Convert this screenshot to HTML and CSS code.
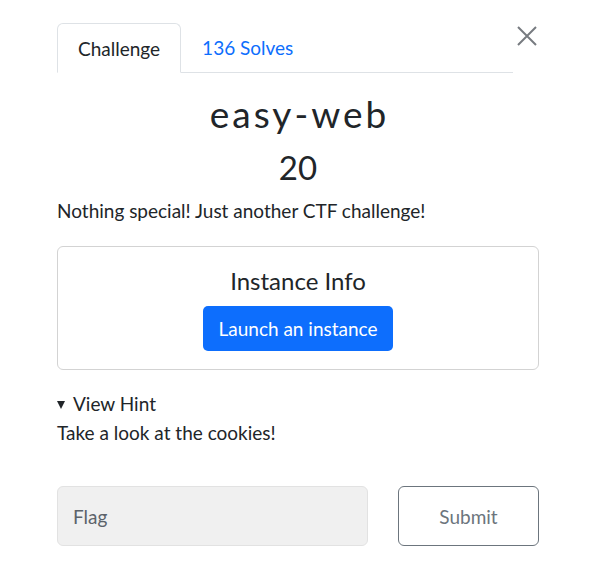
FILE: index.html
```html
<!DOCTYPE html>
<html>
<head>
<meta charset="utf-8">
<link rel="stylesheet" href="styles.css">
</head>
<body>
<div class="modal">
  <div class="top">
    <nav class="tabs">
      <div class="tab active">Challenge</div>
      <div class="tab link">136 Solves</div>
      <div class="tab-fill"></div>
    </nav>
    <button class="close" aria-label="Close">
      <svg width="20" height="20" viewBox="0 0 20 20"><path d="M1 1L19 19M19 1L1 19" stroke="#777b80" stroke-width="2" fill="none"/></svg>
    </button>
  </div>
  <h1 class="title">easy-web</h1>
  <h2 class="value">20</h2>
  <p class="desc">Nothing special! Just another CTF challenge!</p>
  <div class="card">
    <div class="card-title">Instance Info</div>
    <button class="btn-primary">Launch an instance</button>
  </div>
  <div class="hint">
    <div class="hint-toggle"><span class="tri"></span>View Hint</div>
    <div class="hint-body">Take a look at the cookies!</div>
  </div>
  <div class="submit-row">
    <div class="flag">Flag</div>
    <button class="btn-outline">Submit</button>
  </div>
</div>
</body>
</html>
```
FILE: styles.css
```css
* { box-sizing: border-box; }
html, body { margin: 0; padding: 0; background: #fff; }
body {
  font-family: Lato, "Liberation Sans", sans-serif;
  color: #212529;
  font-size: 19px;
}
.modal {
  width: 596px;
  padding: 23px 57px 0 57px;
}
.top {
  display: flex;
  align-items: flex-start;
}
.tabs {
  display: flex;
  flex: 1;
}
.tab {
  height: 50px;
  padding: 0 20px;
  display: flex;
  align-items: center;
  font-size: 19px;
  border-bottom: 1px solid #dee2e6;
}
.tab.active {
  border: 1px solid #dee2e6;
  border-bottom-color: transparent;
  border-radius: 6px 6px 0 0;
}
.tab.link { color: #0d6efd; padding-left: 21px; }
.tab-fill { flex: 1; border-bottom: 1px solid #dee2e6; }
.close {
  margin-left: 2px;
  margin-top: 1px;
  background: none;
  border: 0;
  padding: 2px;
  width: 24px;
  height: 24px;
  display: flex;
  align-items: center;
  justify-content: center;
}
.title {
  margin: 19px 0 0;
  text-align: center;
  font-size: 37px;
  font-weight: 400;
  letter-spacing: 3px;
  line-height: 1.2;
  padding-left: 3px;
}
.value {
  margin: 12px 0 0;
  text-align: center;
  font-size: 33px;
  font-weight: 400;
  line-height: 1.2;
}
.desc {
  margin: 9px 0 21px;
  line-height: 1.5;
}
.card {
  border: 1px solid #d3d3d3;
  border-radius: 6px;
  padding: 20px 0 18px;
  display: flex;
  flex-direction: column;
  align-items: center;
}
.card-title {
  font-size: 24px;
  line-height: 1.2;
  margin-bottom: 10px;
}
.btn-primary {
  font-family: inherit;
  font-size: 19px;
  color: #fff;
  background: #0d6efd;
  border: 0;
  border-radius: 5px;
  width: 190px;
  height: 45px;
}
.hint { margin-top: 20px; line-height: 1.5; }
.hint-toggle { display: flex; align-items: center; }
.tri {
  width: 0; height: 0;
  border-left: 4.5px solid transparent;
  border-right: 4.5px solid transparent;
  border-top: 8px solid #212529;
  margin-right: 8px;
  margin-top: 1px;
}
.submit-row {
  display: flex;
  gap: 30px;
  margin-top: 39px;
}
.flag {
  flex: 1;
  height: 60px;
  background: #f0f0f0;
  border: 1px solid #e2e2e2;
  border-radius: 6px;
  display: flex;
  align-items: center;
  padding-left: 15px;
  color: #5c636a;
}
.btn-outline {
  width: 141px;
  height: 60px;
  font-family: inherit;
  font-size: 19px;
  background: #fff;
  color: #6c757d;
  border: 1px solid #6c757d;
  border-radius: 6px;
}
```
